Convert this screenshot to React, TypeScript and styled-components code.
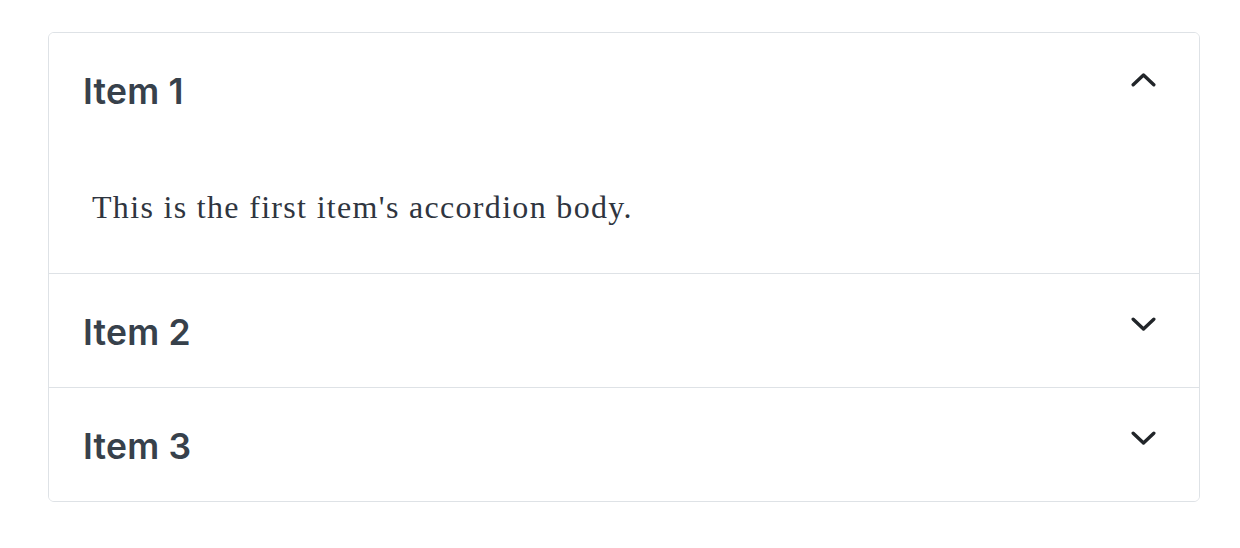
import React, { useState } from "react";
import styled, { createGlobalStyle } from "styled-components";

const Global = createGlobalStyle`
  html, body { margin: 0; padding: 0; background: #ffffff; }
  body { font-family: Inter, "Noto Sans", sans-serif; }
`;

const Page = styled.div`
  padding: 32px 40px 0 48px;
  box-sizing: border-box;
  width: 1240px;
`;

const Card = styled.div`
  width: 1152px;
  border: 1px solid #dee2e6;
  border-radius: 6px;
  overflow: hidden;
  box-sizing: border-box;
`;

const Item = styled.div<{ $last?: boolean }>`
  border-bottom: ${(p) => (p.$last ? "none" : "1px solid #dee2e6")};
`;

const Header = styled.button`
  display: flex;
  align-items: center;
  justify-content: space-between;
  width: 100%;
  height: 113px;
  padding: 0 43px 0 34px;
  box-sizing: border-box;
  background: #ffffff;
  border: none;
  cursor: pointer;
  text-align: left;
`;

const Title = styled.span`
  font-family: Inter, "Noto Sans", sans-serif;
  font-size: 35.5px;
  font-weight: 600;
  color: #37414b;
  letter-spacing: 0.2px;
  margin-top: 3px;
`;

const Chevron = styled.svg<{ $open: boolean }>`
  width: 25px;
  height: 15px;
  flex: none;
  transform: ${(p) => (p.$open ? "rotate(180deg)" : "none")};
  margin-top: ${(p) => (p.$open ? "-21px" : "-12px")};
`;

const Body = styled.div`
  padding: 0 40px 0 43px;
  height: 127px;
  display: flex;
  align-items: center;
  font-family: "Liberation Serif", "DejaVu Serif", serif;
  font-size: 32px;
  color: #2f3540;
  letter-spacing: 1.32px;
`;

const BodyText = styled.span`
  margin-top: -5px;
`;

const items = [
  { title: "Item 1", body: "This is the first item's accordion body." },
  { title: "Item 2", body: "This is the second item's accordion body." },
  { title: "Item 3", body: "This is the third item's accordion body." },
];

export default function App() {
  const [open, setOpen] = useState<number | null>(0);
  return (
    <>
      <Global />
      <Page>
        <Card>
          {items.map((it, i) => (
            <Item key={it.title} $last={i === items.length - 1}>
              <Header onClick={() => setOpen(open === i ? null : i)}>
                <Title>{it.title}</Title>
                <Chevron $open={open === i} viewBox="0 0 25 15">
                  <path
                    d="M2.2 2.2 L12.5 12 L22.8 2.2"
                    fill="none"
                    stroke="#212529"
                    strokeWidth="3.4"
                    strokeLinecap="round"
                    strokeLinejoin="round"
                  />
                </Chevron>
              </Header>
              {open === i && (
                <Body>
                  <BodyText>{it.body}</BodyText>
                </Body>
              )}
            </Item>
          ))}
        </Card>
      </Page>
    </>
  );
}
